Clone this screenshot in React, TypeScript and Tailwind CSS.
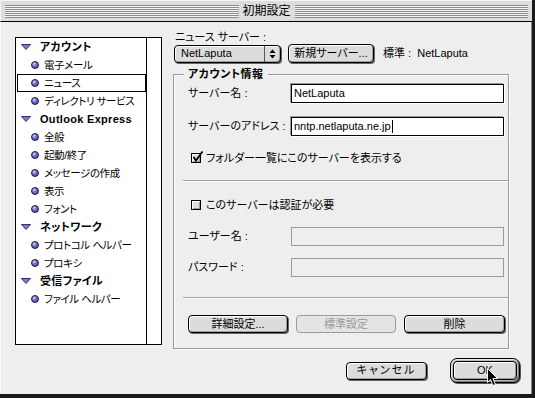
import React from "react";

type Row = { t: "h" | "i"; label: string; sel?: boolean };

const rows: Row[] = [
  { t: "h", label: "アカウント" },
  { t: "i", label: "電子メール" },
  { t: "i", label: "ニュース", sel: true },
  { t: "i", label: "ディレクトリ サービス" },
  { t: "h", label: "Outlook Express" },
  { t: "i", label: "全般" },
  { t: "i", label: "起動/終了" },
  { t: "i", label: "メッセージの作成" },
  { t: "i", label: "表示" },
  { t: "i", label: "フォント" },
  { t: "h", label: "ネットワーク" },
  { t: "i", label: "プロトコル ヘルパー" },
  { t: "i", label: "プロキシ" },
  { t: "h", label: "受信ファイル" },
  { t: "i", label: "ファイル ヘルパー" },
];

function Triangle() {
  return (
    <svg width="10" height="6" viewBox="0 0 10 6" className="shrink-0">
      <polygon points="0.5,0.5 9.5,0.5 5,5.5" fill="#7a7ad6" stroke="#30306a" strokeWidth="1" />
    </svg>
  );
}

function Bullet() {
  return (
    <span className="block w-[8px] h-[8px] shrink-0 rounded-full border border-[#14143a] bg-[radial-gradient(circle_at_35%_30%,#e8e8ff_0%,#8080d8_30%,#3a3a98_100%)]" />
  );
}

function Btn({
  children,
  w,
  disabled,
  className = "",
}: {
  children: React.ReactNode;
  w: string;
  disabled?: boolean;
  className?: string;
}) {
  return (
    <div
      className={
        (disabled
          ? "border-[#9a9a9a] text-[#9a9a9a] bg-[#e4e4e4] "
          : "border-black text-black bg-[#dcdcdc] shadow-[inset_1px_1px_0_#ffffff,inset_-1px_-1px_0_#a0a0a0,1px_1px_0_#666] ") +
        "h-[18px] rounded-[4px] border flex items-center justify-center text-[11px] leading-none " +
        w +
        " " +
        className
      }
    >
      {children}
    </div>
  );
}

function Field({ value, disabled, caret }: { value?: string; disabled?: boolean; caret?: boolean }) {
  return (
    <div
      className={
        (disabled
          ? "border-[#9a9a9a] bg-[#eeeeee] "
          : "border-black bg-white shadow-[-1px_-1px_0_#9a9a9a,1px_1px_0_#ffffff] ") +
        "w-[213px] h-[19px] border flex items-center pl-[2px] text-[11px] leading-none"
      }
    >
      {value}
      {caret && <span className="block w-[1px] h-[13px] bg-black ml-[1px]" />}
    </div>
  );
}

function Stripes() {
  return (
    <div className="flex-1 h-[13px] bg-[repeating-linear-gradient(to_bottom,#8c8c8c_0px,#8c8c8c_1px,#f4f4f4_1px,#f4f4f4_2px)]" />
  );
}

export default function App() {
  return (
    <div className="w-[535px] h-[398px] flex flex-col bg-[#eeeeee] border-r-[3px] border-b-[4px] border-[#1a1a1a] font-['Liberation_Sans','Noto_Sans_CJK_JP',sans-serif] text-black [font-feature-settings:'palt'] overflow-hidden">
      {/* Title bar */}
      <div className="h-[22px] shrink-0 bg-[#dddddd] border-b border-black border-t border-l border-t-[#f4f4f4] border-l-[#f4f4f4] flex items-center px-[4px]">
        <Stripes />
        <div className="px-[4px] text-[12px] leading-none">初期設定</div>
        <Stripes />
      </div>

      {/* Content */}
      <div className="flex-1 flex flex-col border-l border-[#f8f8f8] border-r border-r-[#8a8a8a]">
        <div className="flex pl-[14px] pt-[9px]">
          {/* Left list */}
          <div className="mt-[6px] w-[147px] h-[308px] border border-black bg-white flex">
            <div className="flex-1 border-r border-black">
              {rows.map((r, i) =>
                r.t === "h" ? (
                  <div key={i} className="h-[18px] flex items-center pl-[4px] gap-[9px] font-bold border border-transparent text-[11px]">
                    <Triangle />
                    <span className="leading-none tracking-[0.3px]">{r.label}</span>
                  </div>
                ) : (
                  <div
                    key={i}
                    className={
                      "h-[18px] flex items-center pl-[13px] gap-[5px] ml-[1px] border text-[10.5px] tracking-[-0.4px] " +
                      (r.sel ? "border-black" : "border-transparent")
                    }
                  >
                    <Bullet />
                    <span className="leading-none">{r.label}</span>
                  </div>
                )
              )}
            </div>
            <div className="w-[14px]" />
          </div>

          {/* Right panel */}
          <div className="ml-[11px] w-[337px] flex flex-col">
            <div className="h-[13px] pl-[2px] text-[11px] leading-[13px]">ニュース サーバー :</div>
            <div className="h-[19px] flex items-center">
              <div className="ml-[1px] w-[107px] h-[18px] rounded-[4px] border border-black bg-[#dcdcdc] shadow-[inset_1px_1px_0_#ffffff,inset_-1px_-1px_0_#a0a0a0,1px_1px_0_#666] flex items-center">
                <span className="flex-1 pl-[6px] text-[11px] leading-none">NetLaputa</span>
                <div className="w-[16px] h-full border-l border-[#555] flex items-center justify-center">
                  <svg width="7" height="10" viewBox="0 0 7 10">
                    <polygon points="3.5,0.5 6.5,4 0.5,4" fill="black" />
                    <polygon points="0.5,6 6.5,6 3.5,9.5" fill="black" />
                  </svg>
                </div>
              </div>
              <Btn w="w-[86px]" className="ml-[7px] h-[19px]">新規サーバー...</Btn>
              <span className="ml-[9px] text-[11px] leading-none">標準 :&nbsp;&nbsp;NetLaputa</span>
            </div>

            {/* Group box */}
            <div className="relative mt-[11px] w-[336px] h-[275px] border border-[#9a9a9a] shadow-[inset_1px_1px_0_#ffffff,1px_1px_0_#ffffff] flex flex-col">
              <div className="absolute top-[-7px] left-[10px] px-[4px] bg-[#eeeeee] text-[11px] font-bold leading-[13px] tracking-[0.5px]">
                アカウント情報
              </div>

              <div className="mt-[9px] ml-[14px] flex items-center">
                <span className="w-[103px] text-[11px] leading-none">サーバー名 :</span>
                <Field value="NetLaputa" />
              </div>
              <div className="mt-[14px] ml-[14px] flex items-center">
                <span className="w-[103px] text-[11px] leading-none">サーバーのアドレス :</span>
                <Field value="nntp.netlaputa.ne.jp" caret />
              </div>

              <div className="mt-[15px] ml-[17px] h-[14px] flex items-center gap-[5px]">
                <div className="relative w-[10px] h-[10px] border border-black bg-[#dcdcdc] shadow-[inset_1px_1px_0_#ffffff,inset_-1px_-1px_0_#999]">
                  <svg width="12" height="12" viewBox="0 0 12 12" className="absolute left-[0px] top-[-3px]">
                    <polyline points="1.5,6 4,9.5 10.5,0.5" fill="none" stroke="black" strokeWidth="1.8" />
                  </svg>
                </div>
                <span className="text-[11px] leading-none">フォルダー一覧にこのサーバーを表示する</span>
              </div>

              <div className="mt-[15px] ml-[9px] h-[2px] border-t border-[#a0a0a0] border-b border-b-white" />

              <div className="mt-[16px] ml-[17px] h-[14px] flex items-center gap-[5px]">
                <div className="w-[10px] h-[10px] border border-black bg-[#dcdcdc] shadow-[inset_1px_1px_0_#ffffff,inset_-1px_-1px_0_#999]" />
                <span className="text-[11px] leading-none">このサーバーは認証が必要</span>
              </div>

              <div className="mt-[15px] ml-[14px] flex items-center">
                <span className="w-[103px] text-[11px] leading-none">ユーザー名 :</span>
                <Field disabled />
              </div>
              <div className="mt-[12px] ml-[14px] flex items-center">
                <span className="w-[103px] text-[11px] leading-none">パスワード :</span>
                <Field disabled />
              </div>

              <div className="mt-[20px] ml-[9px] h-[2px] border-t border-[#a0a0a0] border-b border-b-white" />

              <div className="mt-[16px] ml-[14px] flex gap-[8px]">
                <Btn w="w-[100px]">詳細設定...</Btn>
                <Btn w="w-[100px]" disabled>標準設定</Btn>
                <Btn w="w-[101px]">削除</Btn>
              </div>
            </div>
          </div>
        </div>

        {/* Bottom buttons */}
        <div className="mt-[9px] flex justify-end items-center pr-[11px]">
          <Btn w="w-[81px]" className="tracking-[2px]">キャンセル</Btn>
          <div className="relative ml-[23px] w-[70px] h-[25px] rounded-[7px] border border-black bg-[#bdbdbd] shadow-[inset_1px_1px_0_#e8e8e8,inset_-1px_-1px_0_#777,1px_1px_0_#555] p-[2px]">
            <div className="w-full h-full rounded-[4px] border border-black bg-[#dcdcdc] shadow-[inset_1px_1px_0_#ffffff,inset_-1px_-1px_0_#a0a0a0] flex items-center justify-center text-[11px] leading-none">
              OK
            </div>
            <svg
              width="12"
              height="19"
              viewBox="0 0 12 19"
              className="absolute left-[36px] top-[9px]"
            >
              <polygon
                points="0.5,0.5 0.5,14.5 3.5,11.5 6,17.5 8.5,16.5 6,10.5 10.5,10.5"
                fill="black"
                stroke="white"
                strokeWidth="1"
              />
            </svg>
          </div>
        </div>
      </div>
    </div>
  );
}
